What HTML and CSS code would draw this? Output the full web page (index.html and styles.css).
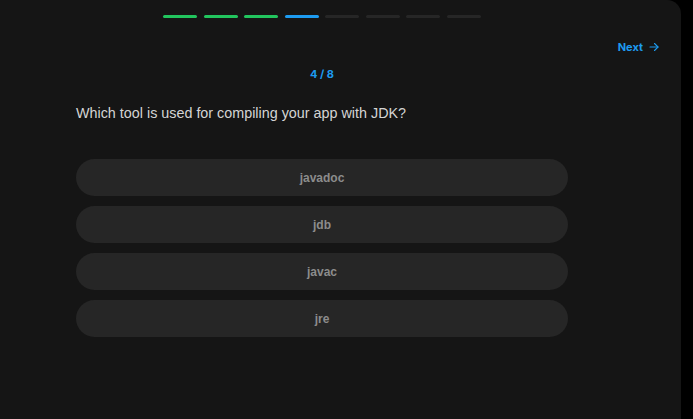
FILE: index.html
```html
<!DOCTYPE html>
<html>
<head>
<meta charset="utf-8">
<link rel="stylesheet" href="styles.css">
</head>
<body>
<div class="panel">
  <div class="column">
    <div class="progress">
      <span class="seg done"></span>
      <span class="seg done"></span>
      <span class="seg done"></span>
      <span class="seg current"></span>
      <span class="seg"></span>
      <span class="seg"></span>
      <span class="seg"></span>
      <span class="seg"></span>
    </div>
  </div>
  <div class="nav">
    <a class="next">Next
      <svg width="12" height="12" viewBox="0 0 24 24" fill="none" stroke="currentColor" stroke-width="2.2" stroke-linecap="round" stroke-linejoin="round"><path d="M4 12h16"/><path d="M13 5l7 7-7 7"/></svg>
    </a>
  </div>
  <div class="column">
    <div class="counter">4 / 8</div>
    <p class="question">Which tool is used for compiling your app with JDK?</p>
    <div class="options">
      <button class="option">javadoc</button>
      <button class="option">jdb</button>
      <button class="option">javac</button>
      <button class="option">jre</button>
    </div>
  </div>
</div>
</body>
</html>
```

FILE: styles.css
```css
html, body {
  margin: 0;
  padding: 0;
  background: #000;
  height: 100%;
}
body {
  font-family: Inter, "Noto Sans", sans-serif;
  overflow: hidden;
}
.panel {
  width: 681px;
  height: 419px;
  background: #151515;
  border-top-right-radius: 14px;
  box-sizing: border-box;
  padding-top: 15px;
}
.column {
  width: 492px;
  margin-left: 76px;
}
.progress {
  display: flex;
  justify-content: center;
  gap: 6.5px;
}
.seg {
  width: 34px;
  height: 3px;
  border-radius: 2px;
  background: #262626;
}
.seg.done { background: #22c55e; }
.seg.current { background: #1d9bf0; }
.nav {
  display: flex;
  justify-content: flex-end;
  padding-right: 21px;
  margin-top: 21px;
}
.next {
  display: flex;
  align-items: center;
  gap: 5px;
  color: #1d9bf0;
  font-size: 11px;
  font-weight: 700;
  line-height: 16px;
}
.counter {
  text-align: center;
  color: #1d9bf0;
  font-size: 11px;
  font-weight: 700;
  line-height: 16px;
  margin-top: 11px;
}
.question {
  margin: 21px 0 0;
  color: #d4d4d4;
  font-family: "Liberation Sans", Arial, sans-serif;
  font-size: 14.35px;
  line-height: 20px;
}
.options {
  display: flex;
  flex-direction: column;
  gap: 10px;
  margin-top: 36px;
}
.option {
  height: 37px;
  border: none;
  border-radius: 999px;
  background: #262626;
  color: #8c8c8c;
  font-family: "Liberation Sans", Arial, sans-serif;
  font-size: 12px;
  font-weight: 700;
  padding: 0;
}
```
